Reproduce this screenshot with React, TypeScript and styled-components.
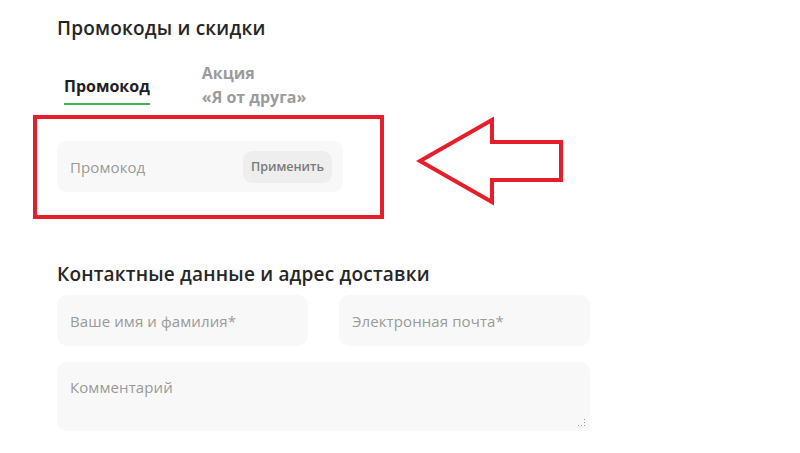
import React from "react";
import styled, { createGlobalStyle } from "styled-components";

const Global = createGlobalStyle`
  html, body { margin: 0; padding: 0; background: #ffffff; }
  body { font-family: "Open Sans", "Noto Sans", sans-serif; }
  * { box-sizing: border-box; }
`;

const Page = styled.div`
  width: 800px;
  height: 453px;
  padding: 16px 0 0 57px;
  overflow: hidden;
  background: #fff;
`;

const Heading = styled.h2<{ $gap?: number }>`
  margin: ${(p) => p.$gap ?? 0}px 0 0;
  font-size: 19px;
  line-height: 24px;
  font-weight: 600;
  color: #262626;
  letter-spacing: 0.2px;
`;

const Tabs = styled.div`
  display: flex;
  align-items: center;
  gap: 52px;
  margin: 21px 0 0 7px;
`;

const Tab = styled.div<{ $active?: boolean }>`
  font-size: 16px;
  line-height: 24px;
  font-weight: 700;
  color: ${(p) => (p.$active ? "#1f1f1f" : "#9b9b9b")};
  padding: ${(p) => (p.$active ? "9px 0 5px" : "0")};
  border-bottom: ${(p) => (p.$active ? "2px solid #3db55a" : "none")};
`;

const PromoRow = styled.div`
  display: flex;
  align-items: flex-start;
  gap: 32px;
  margin: 6px 0 0 -24px;
`;

const Highlight = styled.div`
  width: 351px;
  height: 104px;
  border: 4px solid #e61e2b;
  padding: 22px 0 0 20px;
`;

const Field = styled.div<{ $w: number }>`
  width: ${(p) => p.$w}px;
  height: 51px;
  background: #f8f8f8;
  border-radius: 10px;
  display: flex;
  align-items: center;
  padding: 0 11px 0 13px;
`;

const TextInput = styled.input`
  flex: 1;
  min-width: 0;
  border: none;
  outline: none;
  background: transparent;
  font-family: "Open Sans", sans-serif;
  font-size: 15px;
  padding: 0;
  color: #333;
  letter-spacing: 0.1px;
  &::placeholder { color: #9a9a9a; }
`;

const ApplyButton = styled.button`
  height: 32px;
  width: 89px;
  padding: 0;
  border: none;
  border-radius: 9px;
  background: #eeeeee;
  color: #7a7a7a;
  font-family: "Open Sans", sans-serif;
  font-weight: 600;
  font-size: 12.5px;
`;

const Arrow = styled.svg`
  display: block;
  margin-top: 1px;
  flex: none;
`;

const Grid = styled.div`
  width: 533px;
  display: grid;
  grid-template-columns: 251px 251px;
  column-gap: 31px;
  row-gap: 16px;
  margin-top: 9px;
`;

const Comment = styled.textarea`
  grid-column: 1 / -1;
  height: 69px;
  border: none;
  outline: none;
  border-radius: 10px;
  background: #f8f8f8;
  padding: 15px 13px;
  font-family: "Open Sans", sans-serif;
  font-size: 15px;
  line-height: 20px;
  letter-spacing: 0.1px;
  color: #333;
  &::placeholder { color: #9a9a9a; }
  &::-webkit-resizer {
    background:
      radial-gradient(circle, #9a9a9a 0.8px, transparent 1px) 8px 8px / 3px 3px no-repeat,
      radial-gradient(circle, #9a9a9a 0.8px, transparent 1px) 5px 8px / 3px 3px no-repeat,
      radial-gradient(circle, #9a9a9a 0.8px, transparent 1px) 8px 5px / 3px 3px no-repeat,
      radial-gradient(circle, #9a9a9a 0.8px, transparent 1px) 2px 8px / 3px 3px no-repeat,
      radial-gradient(circle, #9a9a9a 0.8px, transparent 1px) 8px 2px / 3px 3px no-repeat,
      #f8f8f8;
  }
`;

export default function App() {
  return (
    <Page>
      <Global />
      <Heading>Промокоды и скидки</Heading>
      <Tabs>
        <Tab $active>Промокод</Tab>
        <Tab>
          Акция
          <br />
          «Я от друга»
        </Tab>
      </Tabs>
      <PromoRow>
        <Highlight>
          <Field $w={286}>
            <TextInput placeholder="Промокод" />
            <ApplyButton>Применить</ApplyButton>
          </Field>
        </Highlight>
        <Arrow width="150" height="92" viewBox="0 0 150 92">
          <polygon
            points="4,45 76,4 76,26 145,26 145,64 76,64 76,86"
            fill="none"
            stroke="#e61e2b"
            strokeWidth="4"
            strokeLinejoin="miter"
          />
        </Arrow>
      </PromoRow>
      <Heading $gap={43}>Контактные данные и адрес доставки</Heading>
      <Grid>
        <Field $w={251}>
          <TextInput placeholder="Ваше имя и фамилия*" />
        </Field>
        <Field $w={251}>
          <TextInput placeholder="Электронная почта*" />
        </Field>
        <Comment placeholder="Комментарий" />
      </Grid>
    </Page>
  );
}
